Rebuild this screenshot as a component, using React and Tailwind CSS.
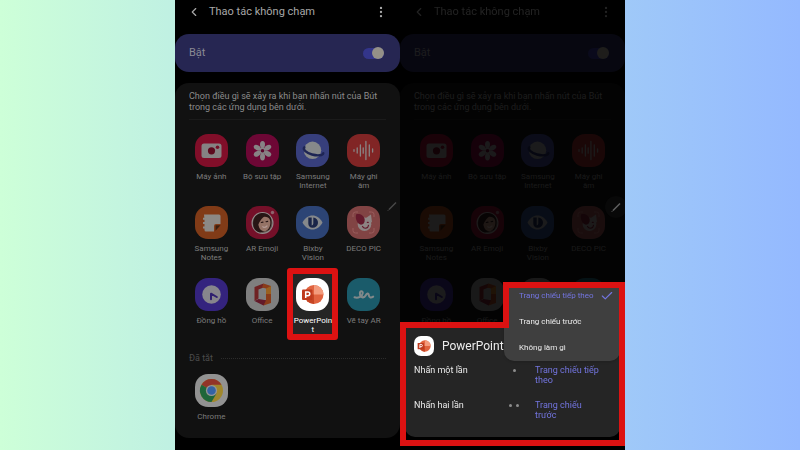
import { ChevronLeft, EllipsisVertical, Check } from 'lucide-react'

function PowerPointLogo() {
  return (
    <svg viewBox="0 0 33 33" className="size-full" aria-hidden="true">
      <circle cx="18" cy="16.500" r="9.500" fill="#e0633f" />
      <path d="M18 7a9.500 9.500 0 0 1 9.500 9.500H18z" fill="#f39b7d" />
      <path d="M8.500 16.500H18V26a9.500 9.500 0 0 1-9.500-9.500z" fill="#c64524" />
      <rect x="6" y="11.500" width="10.500" height="10.500" rx="1" fill="#bf3a1d" />
      <path d="M9.700 19.900v-6h2.200a1.900 1.900 0 0 1 0 3.800H9.700" fill="none" stroke="#fff" strokeWidth="1.500" />
    </svg>
  )
}

const ICONS = {
  camera: (
    <>
      <path d="M9 9.500h15a2.500 2.500 0 0 1 2.500 2.500v9.500A2.500 2.500 0 0 1 24 24H9a2.500 2.500 0 0 1-2.500-2.500V12A2.500 2.500 0 0 1 9 9.500z" fill="#929090" />
      <circle cx="16.500" cy="16.800" r="3.600" fill="#650a20" />
      <circle cx="22.500" cy="13.200" r="1.800" fill="#80102a" />
    </>
  ),
  gallery: (
    <>
      {[0, 60, 120, 180, 240, 300].map(a => (
        <ellipse key={a} cx="16.500" cy="10.600" rx="2.500" ry="3.700" transform={`rotate(${a} 16.500 16.700)`} fill="#949092" />
      ))}
      <circle cx="16.500" cy="16.700" r="3.200" fill="#949092" />
      <circle cx="16.500" cy="16.700" r="1.800" fill="#620630" />
    </>
  ),
  internet: (
    <>
      <circle cx="16.500" cy="16.300" r="8.700" fill="#949698" />
      <path d="M8.400 13.200c-2 2.300 2 5.800 7.600 7.300 5.800 1.500 10.800 1 11.300-1.300" fill="none" stroke="#20285c" strokeWidth="2.400" strokeLinecap="round" />
    </>
  ),
  recorder: (
    <path d="M7 15.700v1.600M10.200 14v5M13.400 11v11M16.200 13.800v5.400M18.900 7.500v18M22.300 11v11M25.600 15v3" fill="none" stroke="#969090" strokeWidth="1.300" strokeLinecap="round" />
  ),
  notes: (
    <>
      <path d="M9 8.500h15a1.500 1.500 0 0 1 1.500 1.500v8H21a2 2 0 0 0-2 2v5.500h-8A1.500 1.500 0 0 1 9.500 24v-1.500H8v-2h1.500V18H8v-2h1.500v-2.300H8v-2h1.300z" fill="#9a9692" />
      <path d="M20.500 19.300h5l-5 5.500z" fill="#40200e" />
    </>
  ),
  emoji: (
    <>
      <circle cx="16.500" cy="17" r="11" fill="#a09a9a" />
      <circle cx="16.500" cy="17" r="10" fill="#6e5c58" />
      <path d="M8 22c-2.500-6 0-14 7.500-15 6.500-.6 10 3.500 10 8.500 0 3-.7 6-2.500 8.500l-9 2.500c-2.500-.5-5-2-6-4.500z" fill="#2a1716" />
      <path d="M14 12.500c3-2.800 8.800-2.200 10 1.500 1.200 4-.5 9.500-4.400 10.900-3.300 1-6.200-1.400-7-5.200-.7-2.800-.3-5.500 1.400-7.200z" fill="#a47e70" />
      <path d="M11.500 19c2-1.500 2.500-6 7-8.500l-3.500-2-4.500 4z" fill="#2a1716" />
      <path d="M15.300 16.500l1.700-.4M20 15.700l1.700-.3" stroke="#2a1716" strokeWidth="1.100" strokeLinecap="round" />
      <path d="M16.800 20.700c1.300 1 3 .7 4.200-.7" stroke="#c4a8a2" strokeWidth="1.200" fill="none" strokeLinecap="round" />
      <circle cx="26.500" cy="6.500" r="1.700" fill="#9c6c78" />
    </>
  ),
  bixby: (
    <>
      <path d="M6.500 16.500c2.500-4.800 6-7 10-7s7.500 2.200 10 7c-2.500 4.800-6 7-10 7s-7.500-2.200-10-7z" fill="#929599" />
      <path d="M12.300 11.500h3.400v8a2 2 0 0 0 1.600-2v-6a5 5 0 0 1-.8 10.200 4.300 4.300 0 0 1-4.200-4.200z" fill="#1c2850" />
    </>
  ),
  deco: (
    <>
      <path d="M6 11V8.500A2.500 2.500 0 0 1 8.500 6H11M22 6h2.500A2.500 2.500 0 0 1 27 8.500V11M27 22v2.500a2.500 2.500 0 0 1-2.500 2.500H22M11 27H8.500A2.500 2.500 0 0 1 6 24.500V22" fill="none" stroke="#a86464" strokeWidth="1" />
      <circle cx="17.500" cy="18.300" r="6.800" fill="#9b9190" />
      <path d="M17.500 13l6.500-4.500 1 8z" fill="#9b9190" />
      <path d="M9 8.500c3-1.500 8 .5 8.700 5 .3 3-1.200 5-3.700 5.300C10.300 18 8 13 9 8.500z" fill="#6e1c30" />
      <path d="M15.500 20.500c1.500 2.700 5.500 2.200 6-1.200M20.300 16.300h1" fill="none" stroke="#6e1c30" strokeWidth="1.200" strokeLinecap="round" />
    </>
  ),
  clock: (
    <>
      <circle cx="16.500" cy="16.500" r="9.300" fill="#94929a" />
      <path d="M16 21.300v-5.600l5.800 3.300" fill="none" stroke="#33217a" strokeWidth="2" strokeLinecap="round" strokeLinejoin="round" />
    </>
  ),
  office: (
    <>
      <path d="M17.500 5.500L8.500 9v14l4-2.500v-9l5-2z" fill="#7a2426" />
      <path d="M17.500 5.500L25 8v17l-7.500 2.500-1.500-4.500 4-1V10.500l-4-1z" fill="#96401a" />
      <path d="M8.500 23l4-2 7.500 1.200-2.500 5.300z" fill="#6c1a2c" />
      <path d="M20 10.500L25 8v8h-5z" fill="#a86a22" />
    </>
  ),
  powerpoint: (
    <>
      <circle cx="18" cy="16.500" r="9.500" fill="#7c3420" />
      <rect x="6" y="11.500" width="10.500" height="10.500" rx="1" fill="#6c2010" />
    </>
  ),
  doodle: (
    <path d="M7.500 19.300c3.500 1.300 8-.8 8.300-4.300.1-2.300-3-2.300-2.900.7.200 4 4.100 4.900 5.700 1.800 1.200-2.400 3-2.800 3.200-.4.300 2.700 2.300 3.100 4.400 1.500" fill="none" stroke="#8e9698" strokeWidth="2" strokeLinecap="round" strokeLinejoin="round" />
  ),
  chrome: (
    <>
      <circle cx="16.500" cy="16.500" r="11.500" fill="#b09430" />
      <path d="M16.500 16.500L6.540 10.750a11.500 11.500 0 0 1 19.920 0H16.500z" fill="#a0382c" />
      <path d="M6.540 10.750a11.500 11.500 0 0 0 9.960 17.250l5-8.600-5-2.900z" fill="#20703f" />
      <circle cx="16.500" cy="16.500" r="5.600" fill="#a4a4a4" />
      <circle cx="16.500" cy="16.500" r="4.300" fill="#386cb4" />
    </>
  ),
}

const APPS = [
  { id: 'camera', name: 'Máy ảnh', bg: 'bg-[#8e0e2c]' },
  { id: 'gallery', name: 'Bộ sưu tập', bg: 'bg-[#78063a]' },
  { id: 'internet', name: 'Samsung Internet', bg: 'bg-[#3c4488]' },
  { id: 'recorder', name: 'Máy ghi âm', bg: 'bg-[#8e2828]' },
  { id: 'notes', name: 'Samsung Notes', bg: 'bg-[#8e4018]' },
  { id: 'emoji', name: 'AR Emoji', bg: 'bg-[#80102c]' },
  { id: 'bixby', name: 'Bixby Vision', bg: 'bg-[#304a80]' },
  { id: 'deco', name: 'DECO PIC', bg: 'bg-[#8e4a4a]' },
  { id: 'clock', name: 'Đồng hồ', bg: 'bg-[#38268a]' },
  { id: 'office', name: 'Office', bg: 'bg-[#8c8c8c]' },
  { id: 'powerpoint', name: 'PowerPoint', bg: 'bg-[#8c8c8c]' },
  { id: 'doodle', name: 'Vẽ tay AR', bg: 'bg-[#1c6474]' },
]

const CHROME = { id: 'chrome', name: 'Chrome', bg: 'bg-[#a0a0a0]' }

function AppTile({ app, highlighted, covered }) {
  return (
    <button type="button" className="relative flex h-18 flex-col items-center">
      {highlighted && (
        <span className="absolute -top-[10px] h-[72px] w-[51px] rounded-[3px] border-[6px] border-[#dc1212] bg-[#252525]" />
      )}
      <span className={`relative size-[33px] rounded-[13px] ${highlighted ? 'bg-white' : `${app.bg} opacity-90`}`}>
        {highlighted ? <PowerPointLogo /> : (
          <svg viewBox="0 0 33 33" className="size-full" aria-hidden="true">
            {ICONS[app.id]}
          </svg>
        )}
      </span>
      {!covered && (
        <span
          className={`relative mt-[5px] w-[39px] text-center text-[8px] leading-[9px] break-words
            ${highlighted ? 'text-white' : 'text-[#7c7c7c]'}`}
        >
          {app.name}
        </span>
      )}
    </button>
  )
}

function AirActions({ id, highlight, covered = [] }) {
  return (
    <div className="flex flex-col">
      <header className="flex h-6 items-center px-3 text-[#a8a8a8]">
        <button type="button" aria-label="Quay lại">
          <ChevronLeft size={14} strokeWidth={2} />
        </button>
        <h1 className="ml-2 flex-1 text-[11px] leading-4">Thao tác không chạm</h1>
        <button type="button" aria-label="Thêm">
          <EllipsisVertical size={14} strokeWidth={2} />
        </button>
      </header>

      <label htmlFor={id} className="mt-[10px] flex h-[38px] items-center justify-between rounded-[14px] bg-[#262652] pr-4 pl-3.5 text-[11px] text-[#8a8a94]">
        Bật
        <span className="relative flex h-3 w-[21px] items-center">
          <input
            id={id}
            type="checkbox"
            role="switch"
            defaultChecked
            className="h-[11px] w-full appearance-none rounded-full bg-[#33358a]"
          />
          <span className="pointer-events-none absolute right-0 size-3 rounded-full bg-[#949088]" />
        </span>
      </label>

      <main className="mt-[11px] h-[355px] rounded-[14px] bg-[#111111]">
        <p className="mx-3.5 h-[37px] border-b border-[#1b1b1b] pt-2 text-[9px] leading-[11px] text-[#8c8c8c]">
          Chọn điều gì sẽ xảy ra khi bạn nhấn nút của Bút trong các ứng dụng bên dưới.
        </p>
        <div className="mx-[11px] mt-3.5 grid grid-cols-4">
          {APPS.map(app => (
            <AppTile
              key={app.id}
              app={app}
              highlighted={highlight === app.id}
              covered={covered.includes(app.id)}
            />
          ))}
        </div>
        <div className="mx-3.5 mt-[2px] flex items-center gap-2 text-[9px] leading-3 text-[#4c4c4c]">
          <h2>Đã tắt</h2>
          <span className="flex-1 border-t border-dotted border-[#2c2c2c]" />
        </div>
        <div className="mx-[11px] mt-[10px] grid grid-cols-4">
          <AppTile app={CHROME} covered={covered.includes('chrome')} />
        </div>
      </main>
    </div>
  )
}

function PenHandle({ className }) {
  return (
    <svg viewBox="0 0 22 22" className={`size-[22px] ${className}`} aria-hidden="true">
      <path d="M8 14.500l7-7" stroke="currentColor" strokeWidth="1.500" />
      <path d="M6.500 16l1.500-1.500" stroke="currentColor" strokeWidth="0.800" />
    </svg>
  )
}

const PRESSES = [
  { label: 'Nhấn một lần', dots: 1, action: 'Trang chiếu tiếp theo' },
  { label: 'Nhấn hai lần', dots: 2, action: 'Trang chiếu trước' },
]

const OPTIONS = ['Trang chiếu tiếp theo', 'Trang chiếu trước', 'Không làm gì']

function ActionSheet() {
  return (
    <div className="absolute inset-x-0 bottom-1 h-[164px]">
      <div className="absolute inset-x-1 bottom-0 h-[120px] bg-black" />
      <section className="absolute inset-x-[5px] bottom-[9px] h-[112px] rounded-b-[10px] bg-[#252525] px-[9px] pt-[11px] text-[#ececec]">
        <div className="flex items-center gap-2">
          <span className="size-5 rounded-[7px] bg-white">
            <PowerPointLogo />
          </span>
          <h2 className="text-[12px] leading-5">PowerPoint</h2>
        </div>
        <div className="mt-[9px] flex flex-col gap-[15px] text-[9px] leading-[10px]">
          {PRESSES.map(p => (
            <div key={p.label} className="flex h-5 items-start">
              <span className="flex-1">{p.label}</span>
              <span className="flex h-[10px] w-3 items-center justify-center gap-1">
                {Array.from({ length: p.dots }, (_, i) => (
                  <span key={i} className="size-[3px] rounded-full bg-[#8c8c8c]" />
                ))}
              </span>
              <button type="button" className="mr-3 ml-[15px] w-16 text-left text-[#7375e0]">
                {p.action}
              </button>
            </div>
          ))}
        </div>
      </section>

      <ul
        role="listbox"
        className="absolute top-0 right-[5px] w-[116px] rounded-b-[10px] bg-[#3f3f3f] pt-px text-[8px] text-[#ececec] shadow"
      >
        {OPTIONS.map((o, i) => (
          <li key={o} role="option" aria-selected={i === 0} className="flex h-[26px] items-center justify-between pr-[6px] pl-[15px]">
            <span className={i === 0 ? 'text-[#7375e0]' : ''}>{o}</span>
            {i === 0 && <Check size={14} strokeWidth={2} className="text-[#7375e0]" />}
          </li>
        ))}
      </ul>

      {/* red outline round the popup and the sheet */}
      <svg viewBox="0 0 225 164" preserveAspectRatio="none" className="pointer-events-none absolute inset-0 size-full" aria-hidden="true">
        <path d="M3 43H106V3H222V161H3z" fill="none" stroke="#dc1212" strokeWidth="6" />
      </svg>
    </div>
  )
}

export default function App() {
  return (
    <div className="grid min-h-screen grid-cols-[7fr_9fr_9fr_7fr] bg-linear-to-r from-[#cdffd8] to-[#94b9ff] font-['Roboto',sans-serif]">
      <div className="relative col-start-2 overflow-hidden bg-black">
        <AirActions id="air-main" highlight="powerpoint" />
        <PenHandle className="absolute top-[195px] right-[-3px] text-[#484848]" />
      </div>
      <div className="relative overflow-hidden bg-black">
        <div className="opacity-20">
          <AirActions id="air-dim" covered={['powerpoint', 'doodle', 'chrome']} />
        </div>
        <PenHandle className="absolute top-[196px] right-[-2px] rounded-full bg-[#080808] text-[#606060]" />
        <ActionSheet />
      </div>
    </div>
  )
}
